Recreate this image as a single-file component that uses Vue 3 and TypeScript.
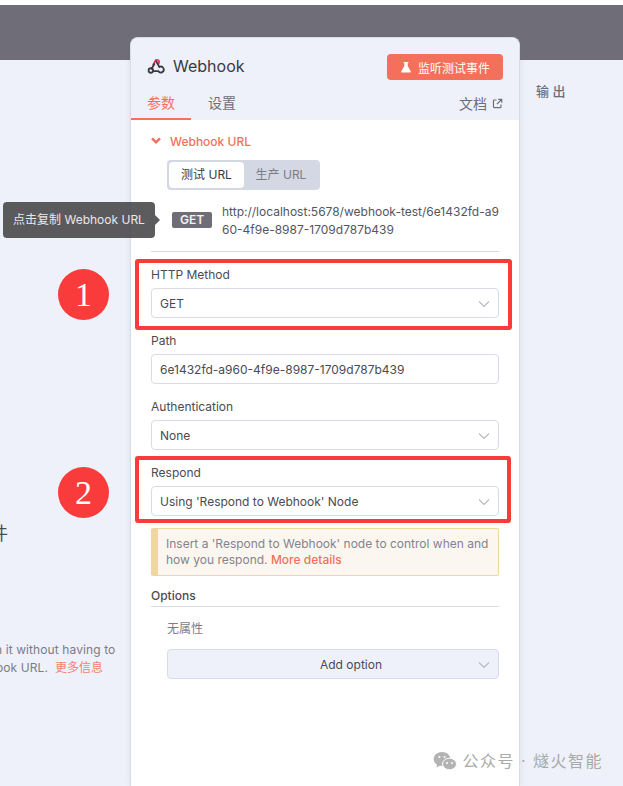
<script setup lang="ts">
const fields = [
  { label: 'HTTP Method', value: 'GET', mark: 'mark-a', select: true },
  { label: 'Path', value: '6e1432fd-a960-4f9e-8987-1709d787b439', mark: '', select: false },
  { label: 'Authentication', value: 'None', mark: '', select: true },
  { label: 'Respond', value: "Using 'Respond to Webhook' Node", mark: 'mark-b', select: true },
]
</script>

<template>
  <div class="page">
    <div class="band"></div>
    <div class="columns">
      <aside class="left">
        <div class="left-title">件</div>
        <p class="left-line first">n it without having to</p>
        <p class="left-line second">ook URL.&nbsp; <a>更多信息</a></p>
      </aside>

      <main class="card">
        <header class="card-head">
          <div class="title-row">
            <svg class="logo" viewBox="0 0 16 16" fill="none" stroke-width="1.6" stroke-linecap="round">
              <path d="M5.4 7 7.2 3.6a1.9 1.9 0 1 1 3 2.2" stroke="#e2355a" />
              <path d="M8.2 3.8 11 8.9a2.6 2.6 0 1 1-1 3.6H5.5" stroke="#3a3a44" />
              <path d="M6.6 6.2 4 10.4" stroke="#3a3a44" />
              <circle cx="3.4" cy="12" r="2" stroke="#3a3a44" />
            </svg>
            <h1>Webhook</h1>
            <button class="listen">
              <svg viewBox="0 0 12 12" width="12" height="12"><path d="M3.6 1h4.8v1H7.7v3l3 5.2c.3.6 0 1.3-.8 1.3H2.1c-.8 0-1.1-.7-.8-1.3l3-5.2V2h-.7z" fill="#fff" /></svg>
              <span>监听测试事件</span>
            </button>
          </div>
          <nav class="tabs">
            <span class="tab active">参数</span>
            <span class="tab">设置</span>
            <span class="docs">文档
              <svg viewBox="0 0 12 12" width="11" height="11" fill="none" stroke="#6f6e78" stroke-width="1.3"><path d="M5 2.2H2.4a.8.8 0 0 0-.8.8v6.6c0 .4.4.8.8.8H9c.4 0 .8-.4.8-.8V7M6.8 1.4h3.8v3.8M10.4 1.6 5.4 6.6" /></svg>
            </span>
          </nav>
        </header>

        <div class="card-body">
          <div class="url-head">
            <svg viewBox="0 0 10 8" width="10" height="8" fill="none" stroke="#f4705a" stroke-width="2.4"><path d="M1 1.4l4 4 4-4" /></svg>
            <span>Webhook URL</span>
          </div>
          <div class="segment">
            <span class="seg on">测试 URL</span>
            <span class="seg">生产 URL</span>
          </div>
          <div class="url-row">
            <span class="method">GET</span>
            <span class="url">http://localhost:5678/webhook-test/6e1432fd-a960-4f9e-8987-1709d787b439</span>
          </div>
          <hr class="rule" />

          <div v-for="f in fields" :key="f.label" class="field" :class="f.mark">
            <label>{{ f.label }}</label>
            <div class="control">
              <span>{{ f.value }}</span>
              <svg v-if="f.select" class="caret" viewBox="0 0 12 8" width="12" height="8" fill="none" stroke="#b4b8c6" stroke-width="1.1"><path d="M1 1.5l5 5 5-5" /></svg>
            </div>
          </div>

          <div class="notice">
            Insert a 'Respond to Webhook' node to control when and how you respond. <a>More details</a>
          </div>

          <div class="options-head">Options</div>
          <div class="options-body">
            <div class="empty">无属性</div>
            <div class="add">
              <span>Add option</span>
              <svg class="caret" viewBox="0 0 12 8" width="12" height="8" fill="none" stroke="#b4b8c6" stroke-width="1.1"><path d="M1 1.5l5 5 5-5" /></svg>
            </div>
          </div>
        </div>
      </main>

      <aside class="right">输 出</aside>
    </div>

    <div class="tip">点击复制 Webhook URL</div>
    <div class="badge one">1</div>
    <div class="badge two">2</div>
    <div class="mark">
      <svg viewBox="0 0 24 20" width="24" height="20" fill="#b3b3b3">
        <ellipse cx="9" cy="8" rx="8.4" ry="7" />
        <path d="M4 12.5 3.6 16.5 8 14z" />
        <ellipse cx="16.5" cy="13" rx="7" ry="5.8" stroke="#fff" />
        <circle cx="14" cy="12" r="1" fill="#fff" />
        <circle cx="19" cy="12" r="1" fill="#fff" />
        <circle cx="6.4" cy="6" r="1.1" fill="#fff" />
        <circle cx="11.6" cy="6" r="1.1" fill="#fff" />
      </svg>
      <span>公众号 · 燧火智能</span>
    </div>
  </div>
</template>

<style>
html, body { margin: 0; background: #fff; }
</style>

<style scoped>
.page {
  position: relative;
  width: 623px;
  height: 786px;
  overflow: hidden;
  padding-top: 5px;
  box-sizing: border-box;
  background: #eef1f9;
  box-shadow: inset 0 5px 0 #fff;
  font-family: Inter, "Noto Sans CJK SC", sans-serif;
  font-size: 12px;
  color: #55555f;
}
.band { height: 55px; background: #6f6e78; }

.columns {
  display: grid;
  grid-template-columns: 130px 390px 1fr;
  height: 726px;
}

.left {
  position: relative;
  overflow: hidden;
  white-space: nowrap;
  color: #7c7c86;
}
.left-title {
  position: absolute;
  left: -10px;
  top: 463px;
  font-size: 18px;
  line-height: 22px;
  color: #4a4a54;
}
.left-line { margin: 0; line-height: 18px; letter-spacing: 0.1px; }
.left-line.first { margin-top: 581px; margin-left: -5px; }
.left-line.second { margin-left: -4px; }
.left-line a { color: #f2836f; letter-spacing: 0; }

.card {
  margin-top: -23px;
  height: 749px;
  background: #fff;
  border: 1px solid #d9dce6;
  border-bottom: 0;
  border-radius: 8px 8px 0 0;
  box-sizing: border-box;
  overflow: hidden;
  box-shadow: 0 0 6px rgba(100, 105, 130, 0.12);
}
.card-head { background: #eef1f9; height: 82px; box-sizing: border-box; padding-top: 16px; }
.title-row { display: flex; align-items: center; padding: 0 16px; height: 26px; }
.logo { width: 18px; height: 18px; margin-right: 8px; margin-top: -2px; }
h1 { margin: -2px 0 0; font-size: 16px; font-weight: 400; color: #3a3a44; flex: 1; }
.listen {
  display: flex;
  align-items: center;
  justify-content: center;
  gap: 6px;
  width: 116px;
  height: 26px;
  border: 0;
  border-radius: 4px;
  padding: 0;
  background: #f4705a;
  color: #fff;
  font: inherit;
  font-size: 12px;
}
.tabs { display: flex; height: 38px; margin-top: 2px; padding: 0 16px; font-size: 14px; color: #6f6e78; }
.tab { height: 38px; box-sizing: border-box; padding-top: 11px; line-height: 20px; }
.tab.active { color: #f4705a; margin-left: -16px; padding-left: 16px; width: 60px; border-bottom: 2px solid #f4705a; }
.tab + .tab { margin-left: 17px; }
.docs { margin-left: auto; display: flex; align-items: center; gap: 5px; height: 20px; margin-top: 11px; }

.card-body { padding: 0 20px; }
.url-head { display: flex; align-items: center; gap: 9px; height: 18px; margin-top: 12px; color: #f4705a; font-weight: 500; }
.segment {
  display: inline-flex;
  margin: 10px 0 0 16px;
  padding: 2px;
  background: #d3d8e4;
  border-radius: 4px;
  height: 30px;
  box-sizing: border-box;
}
.seg { width: 75px; line-height: 26px; text-align: center; color: #7c7c86; border-radius: 4px; }
.seg + .seg { width: 74px; }
.seg.on { background: #fff; color: #3a3a44; }
.url-row { display: flex; margin: 13px 0 0 21px; gap: 10px; align-items: flex-start; }
.method {
  flex: none;
  width: 40px;
  height: 16px;
  margin-top: 9px;
  background: #6f6e78;
  color: #f3f3f6;
  border-radius: 2px;
  font-weight: 600;
  line-height: 16px;
  text-align: center;
}
.url { width: 278px; line-height: 18px; word-break: break-all; }
.rule { border: 0; border-top: 1px solid #d9dce6; margin: 12px 0 0; }

.field { position: relative; margin-top: 14px; }
.field label { display: block; line-height: 18px; height: 18px; margin-bottom: 4px; color: #4a4a54; }
.mark-a::after, .mark-b::after {
  content: "";
  position: absolute;
  left: -16px;
  right: -12px;
  border: 4px solid #fa3b3b;
  border-radius: 3px;
  pointer-events: none;
}
.mark-a::after { top: -7px; bottom: -12px; right: -13px; }
.mark-b::after { top: -8px; bottom: -7px; }
.control, .add {
  position: relative;
  display: flex;
  align-items: center;
  height: 30px;
  box-sizing: border-box;
  border: 1px solid #d9dce6;
  border-radius: 4px;
  padding: 0 8px;
  color: #4a4a54;
}
.caret { position: absolute; right: 8px; top: 11px; }

.notice {
  margin-top: 12px;
  padding: 7px 8px;
  border: 1px solid #f0d7a0;
  border-left-width: 7px;
  border-radius: 2px;
  background: #fbf7f0;
  color: #83838d;
  line-height: 16px;
  height: 48px;
  box-sizing: border-box;
}
.notice a { color: #f4705a; font-weight: 500; }

.options-head {
  margin-top: 10px;
  height: 20px;
  line-height: 20px;
  border-bottom: 1px solid #d9dce6;
  color: #4a4a54;
  font-weight: 500;
}
.options-body { padding-left: 16px; }
.empty { margin-top: 13px; line-height: 18px; color: #7c7c86; }
.add { margin-top: 11px; background: #eef1f9; justify-content: center; padding-left: 44px; }

.right { padding: 22px 0 0 16px; color: #6f6e78; font-weight: 500; font-size: 13px; line-height: 18px; }

.tip {
  position: absolute;
  left: 3px;
  top: 202px;
  width: 152px;
  height: 36px;
  border-radius: 4px;
  background: rgba(64, 64, 66, 0.85);
  color: #e8e8ec;
  line-height: 36px;
  text-align: center;
}
.tip::after {
  content: "";
  position: absolute;
  right: -5px;
  top: 13px;
  border-left: 5px solid rgba(64, 64, 66, 0.85);
  border-top: 5px solid transparent;
  border-bottom: 5px solid transparent;
}
.badge {
  position: absolute;
  left: 58px;
  width: 51px;
  height: 51px;
  border-radius: 50%;
  background: #fa3b3b;
  color: #fff;
  font-family: "Liberation Serif", serif;
  font-size: 34px;
  line-height: 51px;
  text-align: center;
}
.one { top: 269px; }
.two { top: 467px; }
.mark {
  position: absolute;
  right: 20px;
  top: 750px;
  display: flex;
  align-items: center;
  gap: 5px;
  font-size: 16px;
  line-height: 22px;
  color: #a9a9a9;
  letter-spacing: 1.5px;
}
</style>
